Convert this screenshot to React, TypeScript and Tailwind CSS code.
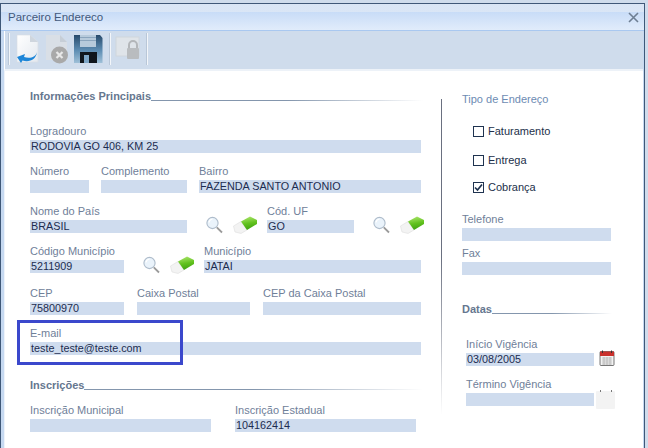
import React from 'react';

const Field = ({ label, value, w, labelClass }: { label: string; value?: string; w: string; labelClass?: string }) => (
  <div className={`flex flex-col shrink-0 ${w}`}>
    <span className={`text-[11px] leading-[14px] text-[#6f8099] whitespace-nowrap ${labelClass || ''}`}>{label}</span>
    <div className="h-[13px] mt-[2px] pl-px bg-[#cfdcee] text-[10.8px] leading-[13px] text-[#1c2c50] whitespace-nowrap overflow-hidden">{value}</div>
  </div>
);

const Heading = ({ text, w }: { text: string; w: string }) => (
  <div className={`flex items-end ${w}`}>
    <span className="text-[11px] leading-[14px] font-bold text-[#66778f] whitespace-nowrap">{text}</span>
    <div className="flex-1 h-px mb-[2px] bg-gradient-to-r from-[#8496ad] via-[#8496ad] to-transparent" />
  </div>
);

const Check = ({ label, checked, mt }: { label: string; checked?: boolean; mt: string }) => (
  <div className={`flex items-center gap-[4px] pl-[11px] ${mt}`}>
    <div className="w-[11px] h-[11px] border border-[#1f3350] bg-white flex items-center justify-center">
      {checked && (
        <svg width="9" height="9" viewBox="0 0 9 9">
          <path d="M1 4.5 L3.5 7 L8 1.5" fill="none" stroke="#1f3350" strokeWidth="1.7" />
        </svg>
      )}
    </div>
    <span className="text-[11px] leading-[14px] text-[#22304a]">{label}</span>
  </div>
);

const Magnifier = () => (
  <svg width="18" height="18" viewBox="0 0 18 18" className="shrink-0">
    <circle cx="7.5" cy="7" r="5.6" fill="#eaf3fb" stroke="#aebccb" strokeWidth="1.1" />
    <path d="M4 6.5 A4 4 0 0 1 7.5 3" fill="none" stroke="#ffffff" strokeWidth="1.2" />
    <path d="M11.8 11.3 L17 16.5" stroke="#9a9a9a" strokeWidth="1.8" />
  </svg>
);

const Eraser = () => (
  <svg width="24" height="18" viewBox="0 0 24 18" className="shrink-0">
    <defs>
      <linearGradient id="eg" x1="0.4" y1="0" x2="0.6" y2="1">
        <stop offset="0" stopColor="#a9e46a" />
        <stop offset="0.5" stopColor="#62c21e" />
        <stop offset="1" stopColor="#3c9f10" />
      </linearGradient>
    </defs>
    <path d="M0.5 10 L8 5.5 L14 14 L8 17.5 L2 16 Z" fill="#f3f3f3" stroke="#dedede" strokeWidth="0.6" />
    <path d="M8 5.5 L17 0.5 L24 4 L24 8 L14 14 Z" fill="url(#eg)" />
  </svg>
);

// fixed height so the icons hang over the row without stretching it
const Tools = ({ ml }: { ml: string }) => (
  <div className={`flex items-start gap-[10px] mt-[12px] h-[17px] ${ml}`}>
    <Magnifier />
    <Eraser />
  </div>
);

const Sep = ({ ml }: { ml: string }) => <div className={`w-[2px] h-[32px] shrink-0 bg-[#f3f6fa] border-l border-[#b9c7d8] ${ml}`} />;

const Calendar = ({ faded }: { faded?: boolean }) =>
  faded ? (
    <svg width="19" height="20" viewBox="0 0 19 20" className="shrink-0 ml-[2px]">
      <rect x="0" y="2" width="19" height="18" rx="1" fill="#f3f3f3" />
      <rect x="4" y="1" width="1" height="2" fill="#777" />
      <rect x="15" y="1" width="1" height="2" fill="#777" />
    </svg>
  ) : (
    <svg width="16" height="16" viewBox="0 0 16 16" className="shrink-0 ml-[5px]">
      <rect x="1" y="1.5" width="14" height="14" rx="1" fill="#f2f2f2" stroke="#555" strokeWidth="0.8" />
      <rect x="1" y="1.5" width="14" height="4.5" fill="#c9302c" />
      <path d="M3 8 H13 M3 10 H13 M3 12 H13 M3 14 H13 M5 7 V15 M8 7 V15 M11 7 V15" stroke="#a5a5a5" strokeWidth="0.6" />
      <rect x="3" y="0.5" width="1" height="2.5" fill="#333" />
      <rect x="12" y="0.5" width="1" height="2.5" fill="#333" />
    </svg>
  );

export default function App() {
  return (
    <div className="relative w-[648px] h-[448px] overflow-hidden bg-[#cfdcec] font-['Liberation_Sans',sans-serif]">
      <div className="h-[3px]" />
      <div className="h-[445px] w-[645px] flex flex-col bg-[#c6d9f1] border-t border-l border-r border-[#3f5878] pl-[3px] pr-px">
        {/* title bar */}
        <div className="h-[26px] -ml-[3px] -mr-px shrink-0 flex items-center justify-between pl-[7px] pr-[5px] pt-px bg-[linear-gradient(to_bottom,#d9e5f5_0,#dae6f6_8px,#c8dcf7_8px,#e1ecfb_100%)]">
          <span className="text-[11.5px] text-[#43597c]">Parceiro Endereco</span>
          <svg width="11" height="11" viewBox="0 0 11 11">
            <path d="M1 1 L10 10 M10 1 L1 10" stroke="#6e7f93" strokeWidth="1.6" />
          </svg>
        </div>
        <div className="h-px -ml-[3px] -mr-px bg-[#a9c8f0] shrink-0" />
        {/* toolbar */}
        <div className="h-[40px] shrink-0 flex items-center pb-[2px] bg-[#cfdcec] border-l border-white border-b-2 border-b-[#edf2f8]">
          <Sep ml="ml-[3px]" />
          <svg width="24" height="30" viewBox="0 0 24 30" className="ml-[5px]">
            <defs>
              <linearGradient id="pg" x1="0" y1="0" x2="1" y2="1">
                <stop offset="0" stopColor="#ffffff" />
                <stop offset="1" stopColor="#e4e9ef" />
              </linearGradient>
            </defs>
            <path d="M2 1 H15 L23 8 V28 H2 Z" fill="url(#pg)" stroke="#d8dee5" strokeWidth="0.7" />
            <path d="M15 1 L15 8 L23 8 Z" fill="#cfd6de" />
            <path d="M22 18 C21 23 15 25 9 23 L10 20 L2 23 L6 29 L7.5 26.5 C14 28.5 21 26 22 18 Z" fill="#1e86d8" />
          </svg>
          <svg width="24" height="30" viewBox="0 0 24 30" className="ml-[6px]">
            <path d="M1 1 H15 L22 8 V26 H1 Z" fill="#d9dfe6" />
            <path d="M15 1 V8 H22 Z" fill="#c6ced7" />
            <circle cx="14.5" cy="21" r="8.5" fill="#a9a9a9" />
            <path d="M11.5 18 L17.5 24 M17.5 18 L11.5 24" stroke="#e8e8e8" strokeWidth="2.2" />
          </svg>
          <svg width="30" height="30" viewBox="0 0 30 30" className="ml-[4px]">
            <defs>
              <linearGradient id="fg" x1="0" y1="0" x2="0" y2="1">
                <stop offset="0" stopColor="#274a6b" />
                <stop offset="0.55" stopColor="#5d8db3" />
                <stop offset="1" stopColor="#9fc0d8" />
              </linearGradient>
            </defs>
            <path d="M1 1 H27 L29.5 4 V29 H1 Z" fill="url(#fg)" />
            <rect x="7" y="1" width="16" height="12" fill="#b7cadb" />
            <rect x="7" y="3" width="16" height="1" fill="#8ba5bd" />
            <rect x="7" y="6" width="16" height="1" fill="#8ba5bd" />
            <rect x="7" y="18" width="17" height="11" fill="#10161c" />
            <rect x="11" y="21" width="5" height="8" fill="#7ea6c6" />
          </svg>
          <Sep ml="ml-[6px]" />
          <svg width="26" height="26" viewBox="0 0 26 26" className="ml-[4px]">
            <rect x="1" y="1" width="23" height="19" fill="#dfe4e9" stroke="#d0d6dc" />
            <rect x="12" y="12" width="12" height="11" rx="1" fill="#b9bcbf" />
            <path d="M14 12 V9 A4 4 0 0 1 22 9 V12" fill="none" stroke="#b3b6b9" strokeWidth="2" />
          </svg>
          <Sep ml="ml-[5px]" />
        </div>
        {/* body */}
        <div className="flex-1 bg-white flex border-l border-[#eef3fa]">
          <div className="w-[436px] shrink-0 flex flex-col pl-[25px]">
            <Heading text="Informações Principais" w="w-[393px] mt-[18px]" />
            <div className="mt-[21px]">
              <Field label="Logradouro" value="RODOVIA GO 406, KM 25" w="w-[391px]" labelClass="text-[11.8px]" />
            </div>
            <div className="flex gap-[12px] mt-[11px]">
              <Field label="Número" w="w-[59px]" />
              <Field label="Complemento" w="w-[86px]" />
              <Field label="Bairro" value="FAZENDA SANTO ANTONIO" w="w-[222px]" />
            </div>
            <div className="flex mt-[11px]">
              <Field label="Nome do País" value="BRASIL" w="w-[157px]" />
              <Tools ml="ml-[18px]" />
              <div className="ml-[10px]"><Field label="Cód. UF" value="GO" w="w-[87px]" /></div>
              <Tools ml="ml-[18px]" />
            </div>
            <div className="flex mt-[11px]">
              <Field label="Código Município" value="5211909" w="w-[94px]" />
              <Tools ml="ml-[18px]" />
              <div className="ml-[10px]"><Field label="Município" value="JATAI" w="w-[217px]" /></div>
            </div>
            <div className="flex gap-[13px] mt-[13px]">
              <Field label="CEP" value="75800970" w="w-[94px]" />
              <Field label="Caixa Postal" w="w-[113px]" />
              <Field label="CEP da Caixa Postal" w="w-[158px]" />
            </div>
            <div className="mt-[11px]">
              <Field label="E-mail" value="teste_teste@teste.com" w="w-[391px]" />
            </div>
            <Heading text="Inscrições" w="w-[393px] mt-[23px]" />
            <div className="flex gap-[24px] mt-[11px]">
              <Field label="Inscrição Municipal" w="w-[181px]" />
              <Field label="Inscrição Estadual" value="104162414" w="w-[181px]" />
            </div>
          </div>
          <div className="w-px h-[316px] mt-[28px] bg-gradient-to-b from-[#6a7080] via-[#6a7080] to-transparent shrink-0" />
          <div className="flex flex-col pl-[20px]">
            <span className="mt-[21px] text-[11px] leading-[14px] text-[#6d8bb3]">Tipo de Endereço</span>
            <Check label="Faturamento" mt="mt-[18px]" />
            <Check label="Entrega" mt="mt-[15px]" />
            <Check label="Cobrança" checked mt="mt-[13px]" />
            <div className="mt-[18px]"><Field label="Telefone" w="w-[149px]" /></div>
            <div className="mt-[5px]"><Field label="Fax" w="w-[149px]" /></div>
            <Heading text="Datas" w="w-[150px] mt-[27px]" />
            <div className="pl-[4px] mt-[21px] flex items-end">
              <Field label="Início Vigência" value="03/08/2005" w="w-[128px]" />
              <Calendar />
            </div>
            <div className="pl-[4px] mt-[11px] flex items-start">
              <Field label="Término Vigência" w="w-[128px]" />
              <div className="mt-[12px] h-[17px]"><Calendar faded /></div>
            </div>
          </div>
        </div>
      </div>
      <div className="absolute left-[17px] top-[320px] w-[166px] h-[45px] border-[3px] border-[#3b48cc]" />
    </div>
  );
}
